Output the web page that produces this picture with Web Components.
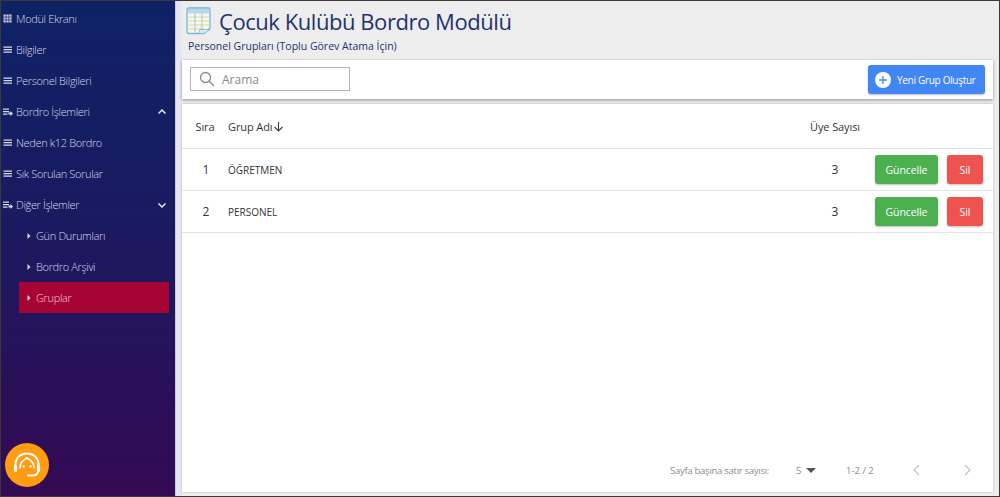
<!DOCTYPE html>
<html lang="tr">
<head>
<meta charset="utf-8">
<title>Bordro</title>
<style>
  html, body { margin: 0; height: 100%; }
  body { font-family: "Open Sans", "Noto Sans", sans-serif; overflow: hidden; }
</style>
</head>
<body>
<app-shell>
  <side-menu slot="side">
    <menu-item icon="grid">Modül Ekranı</menu-item>
    <menu-item icon="lines">Bilgiler</menu-item>
    <menu-item icon="lines">Personel Bilgileri</menu-item>
    <menu-item icon="queue" caret="up">Bordro İşlemleri</menu-item>
    <menu-item icon="lines">Neden k12 Bordro</menu-item>
    <menu-item icon="lines">Sık Sorulan Sorular</menu-item>
    <menu-item icon="queue" caret="down">Diğer İşlemler</menu-item>
    <menu-item sub>Gün Durumları</menu-item>
    <menu-item sub>Bordro Arşivi</menu-item>
    <menu-item sub active>Gruplar</menu-item>
  </side-menu>
  <page-header title-text="Çocuk Kulübü Bordro Modülü" sub-text="Personel Grupları (Toplu Görev Atama İçin)"></page-header>
  <tool-bar></tool-bar>
  <group-table></group-table>
</app-shell>

<script>
const shellTemplate = document.createElement("template");
shellTemplate.innerHTML = `
  <style>
    :host {
      display: grid;
      grid-template-columns: 175px 1fr;
      height: 497px;
      box-sizing: border-box;
      border: 1px solid #3a3a3a;
      background: #ededed;
    }
    aside { min-height: 0; }
    main {
      display: flex;
      flex-direction: column;
      min-width: 0;
      padding: 0 6px 4px 6px;
      background: linear-gradient(90deg, #e5e6f2 0 6px, #ededed 6px);
    }
  </style>
  <aside><slot name="side"></slot></aside>
  <main><slot></slot></main>
`;

class AppShell extends HTMLElement {
  constructor() {
    super();
    this.attachShadow({ mode: "open" });
    this.shadowRoot.append(shellTemplate.content.cloneNode(true));
  }
}

const sideTemplate = document.createElement("template");
sideTemplate.innerHTML = `
  <style>
    :host {
      display: flex;
      flex-direction: column;
      height: 100%;
      box-sizing: border-box;
      padding-top: 2px;
      background: linear-gradient(180deg, #0f2266 0%, #1a1a60 45%, #340a54 100%);
      border-right: 1px solid #c9ccd6;
      color: #fff;
    }
    nav { flex: 1; }
    .help {
      width: 44px;
      height: 44px;
      margin: 0 0 9px 4px;
      border-radius: 50%;
      background: #ff9c12;
      display: flex;
      align-items: center;
      justify-content: center;
    }
  </style>
  <nav><slot></slot></nav>
  <div class="help">
    <svg width="30" height="30" viewBox="0 0 30 30" fill="none" stroke="#fff" stroke-width="2" stroke-linecap="round">
      <path d="M3.500 17V14.500C3.500 7.500 9 3.500 15 3.500S26.500 7.500 26.500 14.500V17"/>
      <path d="M8 17.500C8 12.500 11 10 15 8C19 10 22 12.500 22 17.500" stroke-width="1.800"/>
      <path d="M3.500 16.500V20.500M26.500 16.500V20.500" stroke-width="3.200"/>
      <path d="M26 21C26 24.500 23 25.500 20 25.500H16"/>
      <circle cx="11.500" cy="16.500" r="1.200" fill="#fff" stroke="none"/>
      <circle cx="18.500" cy="16.500" r="1.200" fill="#fff" stroke="none"/>
    </svg>
  </div>
`;

class SideMenu extends HTMLElement {
  constructor() {
    super();
    this.attachShadow({ mode: "open" });
    this.shadowRoot.append(sideTemplate.content.cloneNode(true));
  }
}

const menuIcons = {
  grid: `<svg width="11" height="11" viewBox="0 0 11 11" fill="currentColor"><path d="M1.500 1.500h8v8h-8z" opacity=".95"/><path d="M4.100 1.500v8M6.900 1.500v8M1.500 4.100h8M1.500 6.900h8" stroke="#142064" stroke-width=".7"/></svg>`,
  lines: `<svg width="11" height="11" viewBox="0 0 11 11" fill="currentColor"><path d="M1.500 2.500h8.500v1.200H1.500zM1.500 5h8.500v1.200H1.500zM1.500 7.500h8.500v1.200H1.500z"/></svg>`,
  queue: `<svg width="11" height="11" viewBox="0 0 11 11" fill="currentColor"><path d="M1 2.500h6v1.200H1zM1 5h6v1.200H1zM1 7.500h4.500v1.200H1zM6.500 6.500h2V5L11 7.500 8.500 10V8.500h-2z"/></svg>`
};

const itemTemplate = document.createElement("template");
itemTemplate.innerHTML = `
  <style>
    :host {
      display: block;
      height: 31px;
      font-size: 11px;
      font-weight: 300;
      letter-spacing: -.35px;
      color: #d6d9ea;
    }
    .row {
      display: flex;
      align-items: center;
      gap: 3px;
      height: 100%;
      padding: 0 7px 0 1px;
    }
    :host([sub]) .row {
      margin: 0 6px 0 18px;
      padding-left: 7px;
      gap: 5px;
    }
    :host([active]) .row {
      background: #a60534;
      color: #f7ccd8;
    }
    .ico { display: flex; width: 11px; justify-content: center; }
    :host([sub]) .ico { width: 5px; }
    .label { flex: 1; white-space: nowrap; }
    .caret { display: flex; margin-right: 1px; }
  </style>
  <div class="row">
    <span class="ico"></span>
    <span class="label"><slot></slot></span>
    <span class="caret"></span>
  </div>
`;

class MenuItem extends HTMLElement {
  constructor() {
    super();
    this.attachShadow({ mode: "open" });
    this.shadowRoot.append(itemTemplate.content.cloneNode(true));
    const ico = this.shadowRoot.querySelector(".ico");
    if (this.hasAttribute("sub")) {
      ico.innerHTML = `<svg width="4" height="6" viewBox="0 0 4 6" fill="currentColor"><path d="M.5 0L3.500 3 .5 6z"/></svg>`;
    } else {
      ico.innerHTML = menuIcons[this.getAttribute("icon")];
    }
    const caret = this.getAttribute("caret");
    if (caret) {
      const d = caret === "up" ? "M1.500 6.500L5 3l3.500 3.500" : "M1.500 3.500L5 7l3.500-3.500";
      this.shadowRoot.querySelector(".caret").innerHTML =
        `<svg width="10" height="10" viewBox="0 0 10 10" fill="none" stroke="#e8e8f2" stroke-width="1.500"><path d="${d}"/></svg>`;
    }
  }
}

const headerTemplate = document.createElement("template");
headerTemplate.innerHTML = `
  <style>
    :host {
      display: block;
      height: 59px;
      flex: none;
      box-sizing: border-box;
      padding: 3px 0 0 4px;
      color: #1d3370;
    }
    .top { display: flex; align-items: center; gap: 7px; height: 33px; }
    h1 { margin: 0; font-size: 22px; font-weight: 400; white-space: nowrap; letter-spacing: -.44px; }
    p { margin: 2px 0 0 2px; font-size: 10.500px; }
  </style>
  <div class="top">
    <svg width="26" height="28" viewBox="0 0 26 28">
      <path d="M1 2.500C1 1.700 1.700 1 2.500 1h20c.8 0 1.500.7 1.500 1.500V21l-6 5.500H2.500C1.700 26.500 1 25.800 1 25z" fill="#f3f8f0" stroke="#7fb3d6" stroke-width="1.300"/>
      <rect x="2" y="2" width="21" height="4.500" fill="#bcd6e6"/>
      <path d="M2 10h21M2 14h21M2 18h21M2 22h16" stroke="#e3d79a" stroke-width="1" fill="none"/>
      <path d="M9 6v19M16 6v19" stroke="#9cc5de" stroke-width="1" fill="none"/>
      <path d="M12 26.500l2-4h10l-6 4z" fill="#d8e8f2" stroke="#7fb3d6" stroke-width=".8"/>
    </svg>
    <h1></h1>
  </div>
  <p></p>
`;

class PageHeader extends HTMLElement {
  constructor() {
    super();
    this.attachShadow({ mode: "open" });
    this.shadowRoot.append(headerTemplate.content.cloneNode(true));
    this.shadowRoot.querySelector("h1").textContent = this.getAttribute("title-text");
    this.shadowRoot.querySelector("p").textContent = this.getAttribute("sub-text");
  }
}

const toolTemplate = document.createElement("template");
toolTemplate.innerHTML = `
  <style>
    :host {
      display: flex;
      flex: none;
      align-items: center;
      justify-content: space-between;
      height: 39px;
      box-sizing: border-box;
      padding: 0 8px;
      background: #fff;
      box-shadow: 0 1px 3px rgba(0,0,0,.4);
    }
    .search {
      display: flex;
      align-items: center;
      gap: 7px;
      width: 160px;
      height: 24px;
      margin-top: -1px;
      box-sizing: border-box;
      padding-left: 8px;
      border: 1px solid #b4b4b4;
      color: #8a8a8a;
      font-size: 12px;
    }
    button {
      display: flex;
      align-items: center;
      gap: 6px;
      height: 29px;
      width: 117px;
      padding: 0 0 0 7px;
      border: 0;
      border-radius: 3px;
      background: #4285f4;
      color: #fff;
      font: inherit;
      font-size: 10px;
      letter-spacing: -.3px;
      white-space: nowrap;
      box-shadow: 0 1px 2px rgba(0,0,0,.25);
    }
  </style>
  <div class="search">
    <svg width="16" height="16" viewBox="0 0 16 16" fill="none" stroke="#8a8a8a" stroke-width="1.300"><circle cx="6.500" cy="6.500" r="5"/><path d="M10.200 10.200L15 15"/></svg>
    <span>Arama</span>
  </div>
  <button>
    <svg width="16" height="16" viewBox="0 0 16 16"><circle cx="8" cy="8" r="8" fill="#fff"/><path d="M8 4v8M4 8h8" stroke="#4285f4" stroke-width="1.300"/></svg>
    <span>Yeni Grup Oluştur</span>
  </button>
`;

class ToolBar extends HTMLElement {
  constructor() {
    super();
    this.attachShadow({ mode: "open" });
    this.shadowRoot.append(toolTemplate.content.cloneNode(true));
  }
}

const tableTemplate = document.createElement("template");
tableTemplate.innerHTML = `
  <style>
    :host {
      display: flex;
      flex-direction: column;
      flex: 1;
      min-height: 0;
      margin-top: 5px;
      background: #fff;
      color: #333;
      box-shadow: 0 0 2px rgba(0,0,0,.25);
    }
    .grid { flex: 1; }
    .row {
      display: grid;
      grid-template-columns: 46px 1fr 50px 133px;
      align-items: center;
      box-sizing: border-box;
      height: 42px;
      border-bottom: 1px solid #e4e4e4;
      font-size: 10px;
    }
    .row.head { height: 45px; font-size: 11px; letter-spacing: -.1px; }
    .n { text-align: center; font-size: 12px; padding-left: 2px; }
    .head .n { font-size: 11px; padding-left: 0; }
    .num { text-align: center; font-size: 12px; }
    .head .num { text-align: left; font-size: 11px; white-space: nowrap; }
    .sort { display: flex; align-items: center; }
    .acts { display: flex; gap: 9px; padding-left: 15px; }
    .btn {
      display: flex; align-items: center; justify-content: center;
      height: 29px;
      border-radius: 3px;
      color: #fff;
      font-size: 10.500px;
      letter-spacing: -.1px;
      box-shadow: 0 1px 2px rgba(0,0,0,.25);
    }
    .green { width: 63px; background: #4caf50; }
    .red { width: 36px; background: #ef5350; }
    .pager {
      display: flex;
      align-items: center;
      height: 44px;
      font-size: 9.500px;
      color: #8c8c8c;
      padding-left: 488px;
    }
    .lbl { width: 126px; white-space: nowrap; letter-spacing: -.27px; }
    .sel { display: flex; align-items: center; gap: 5px; width: 50px; }
    .range { width: 66px; }
    .pager svg { display: block; }
    .nav { display: flex; gap: 44px; }
  </style>
  <div class="grid">
    <div class="row head">
      <div class="n">Sıra</div>
      <div class="sort"><span>Grup Adı</span>
        <svg width="11" height="11" viewBox="0 0 11 11" fill="none" stroke="#444" stroke-width="1.200"><path d="M5.500 1v9M1.500 6l4 4 4-4"/></svg>
      </div>
      <div class="num">Üye Sayısı</div>
      <div></div>
    </div>
    <div class="row">
      <div class="n">1</div><div>ÖĞRETMEN</div><div class="num">3</div>
      <div class="acts"><span class="btn green">Güncelle</span><span class="btn red">Sil</span></div>
    </div>
    <div class="row">
      <div class="n">2</div><div>PERSONEL</div><div class="num">3</div>
      <div class="acts"><span class="btn green">Güncelle</span><span class="btn red">Sil</span></div>
    </div>
  </div>
  <div class="pager">
    <span class="lbl">Sayfa başına satır sayısı:</span>
    <span class="sel">5 <svg width="10" height="5" viewBox="0 0 10 5" fill="#555"><path d="M0 0h10L5 5z"/></svg></span>
    <span class="range">1-2 / 2</span>
    <span class="nav">
      <svg width="8" height="12" viewBox="0 0 8 12" fill="none" stroke="#c4c4c4" stroke-width="1.300"><path d="M7 1L2 6l5 5"/></svg>
      <svg width="8" height="12" viewBox="0 0 8 12" fill="none" stroke="#c4c4c4" stroke-width="1.300"><path d="M1 1l5 5-5 5"/></svg>
    </span>
  </div>
`;

class GroupTable extends HTMLElement {
  constructor() {
    super();
    this.attachShadow({ mode: "open" });
    this.shadowRoot.append(tableTemplate.content.cloneNode(true));
  }
}

customElements.define("app-shell", AppShell);
customElements.define("side-menu", SideMenu);
customElements.define("menu-item", MenuItem);
customElements.define("page-header", PageHeader);
customElements.define("tool-bar", ToolBar);
customElements.define("group-table", GroupTable);
</script>
</body>
</html>
